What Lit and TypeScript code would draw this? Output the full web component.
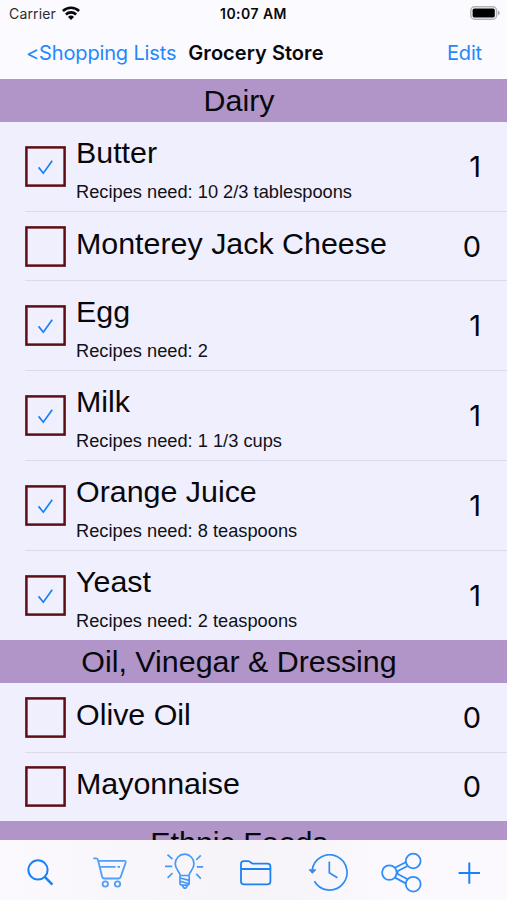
import { LitElement, html, svg, css, nothing } from "lit";
import { customElement, property } from "lit/decorators.js";

interface Item {
  name: string;
  need?: string;
  count: number;
  checked: boolean;
}
interface Section {
  title: string;
  items: Item[];
}

const sections: Section[] = [
  {
    title: "Dairy",
    items: [
      { name: "Butter", need: "10 2/3 tablespoons", count: 1, checked: true },
      { name: "Monterey Jack Cheese", count: 0, checked: false },
      { name: "Egg", need: "2", count: 1, checked: true },
      { name: "Milk", need: "1 1/3 cups", count: 1, checked: true },
      { name: "Orange Juice", need: "8 teaspoons", count: 1, checked: true },
      { name: "Yeast", need: "2 teaspoons", count: 1, checked: true },
    ],
  },
  {
    title: "Oil, Vinegar & Dressing",
    items: [
      { name: "Olive Oil", count: 0, checked: false },
      { name: "Mayonnaise", count: 0, checked: false },
    ],
  },
  { title: "Ethnic Foods", items: [] },
];

@customElement("shopping-row")
export class ShoppingRow extends LitElement {
  @property({ attribute: false }) item!: Item;

  static styles = css`
    :host {
      display: grid;
      grid-template-columns: 41px 1fr auto;
      align-items: center;
      box-sizing: border-box;
      height: 69px;
      margin-left: 25px;
      padding-right: 26px;
      border-bottom: 1px solid #dcdae8;
    }
    :host([tall]) {
      height: 90px;
    }
    .box {
      display: block;
      width: 41px;
      height: 41px;
      fill: none;
    }
    .frame {
      stroke: #5e0d14;
      stroke-width: 2.5;
    }
    .check {
      stroke: #1580fb;
      stroke-width: 1.7;
    }
    .text {
      padding-left: 10px;
      white-space: nowrap;
    }
    .name {
      font-size: 30.4px;
      line-height: 38px;
      margin-top: -7px;
      color: #08080c;
    }
    .need {
      font-size: 18.25px;
      line-height: 22px;
      margin-top: 10px;
      color: #111116;
    }
    :host([tall]) .name {
      margin-top: 2px;
    }
    .count {
      font-family: Inter, "Liberation Sans", sans-serif;
      font-size: 29px;
      line-height: 36px;
      margin-top: 1px;
      color: #08080c;
    }
  `;

  render() {
    const { name, need, count, checked } = this.item;
    return html`
      <svg class="box" viewBox="0 0 41 41">
        <rect class="frame" x="1.4" y="1.4" width="38.2" height="38.2" />
        ${checked ? svg`<path class="check" d="M13.6 21.4 L18.3 27.2 L27.2 14.8" />` : nothing}
      </svg>
      <div class="text">
        <div class="name">${name}</div>
        ${need ? html`<div class="need">Recipes need: ${need}</div>` : nothing}
      </div>
      <div class="count">${count}</div>
    `;
  }
}

const icons = {
  search: svg`<g stroke-width="2"><circle cx="38" cy="29.9" r="9.6"/><path stroke-width="2.6" d="M45 37.2 L52.4 44.6"/></g>`,
  cart: svg`<g stroke-width="1.8" opacity=".75"><path d="M93.3 18.3 h2.8 q1.4 0 1.8 1.4 l4.3 17.3 q.4 1.5 2 1.5 h14.6 q1.4 0 1.8-1.4 l5-14.3 q.5-2-1.4-2 h-25.3"/><path d="M100 26.9 h15.5 M117.5 26.9 h2.5"/><circle cx="105.3" cy="44" r="2.7"/><circle cx="117.5" cy="44" r="2.7"/></g>`,
  bulb: svg`<g stroke-width="1.7" opacity=".8"><path d="M180.3 35.5 C179.6 31.5 175.2 29.5 175.2 23.8 A9.4 9.6 0 0 1 194 23.8 C194 29.5 189.6 31.5 188.9 35.5 Z"/><path d="M180 36 v7.3 q0 1.8 2 1.8 h5.2 q2 0 2-1.8 V36 M180.2 38 l8.8 2.4 M180.2 41.2 l8.8 2.6 M182 45.2 l2.2 3 h1.4 l2-3"/><path d="M165 26.3 h7.2 M196.8 26.8 h6.4 M167.5 14.6 l5 4.6 M200.8 15.3 l-4.6 4.7 M167.6 37.8 l5-4.8 M200.8 38.6 l-4.6-4.8"/></g>`,
  folder: svg`<g stroke-width="1.8"><path d="M241 24 q0-2.8 2.8-2.8 h4.5 q1.4 0 2.4 1.2 t2.5 1.2 h14.2 q3 0 3 3 v15 q0 2.8-3 2.8 h-23.4 q-3 0-3-2.8 Z M241 29 h29.4"/></g>`,
  history: svg`<g stroke-width="1.7" opacity=".9"><path d="M312.2 30 A17.5 17.6 0 1 1 314.4 41.3"/><path d="M329.3 21.5 V32.8 L337.4 37.8"/><path fill="currentColor" stroke-width="1" d="M309.2 29.8 h6.6 l-3.4 3.5 Z"/></g>`,
  share: svg`<g stroke-width="1.8" opacity=".9"><circle cx="389.4" cy="32.6" r="7.3"/><circle cx="413.2" cy="21" r="7.4"/><circle cx="413.2" cy="44.2" r="7.4"/><path d="M395 27.8 L406.5 21.8 M396.4 31.8 L407.6 26 M396.4 33.3 L407.6 39.3 M395 37.6 L406.2 43.6 M396.5 32.5 h2"/></g>`,
  add: svg`<path stroke-width="2" d="M469.3 22.5 V43.8 M458.6 33.1 H480"/>`,
};

@customElement("app-root")
export class AppRoot extends LitElement {
  static styles = css`
    :host {
      display: flex;
      flex-direction: column;
      box-sizing: border-box;
      width: 507px;
      height: 900px;
      overflow: hidden;
      background: #f0effd;
      font-family: "Liberation Sans", Arial, sans-serif;
      color: #08080c;
    }
    .top {
      flex: none;
      height: 79px;
      background: #fbfaff;
      font-family: Inter, "Liberation Sans", sans-serif;
      white-space: nowrap;
    }
    .status {
      display: grid;
      grid-template-columns: 1fr auto 1fr;
      align-items: center;
      height: 27px;
      padding: 0 7px 0 9px;
      font-size: 14px;
    }
    .carrier {
      display: flex;
      align-items: center;
      gap: 6px;
      color: #2c2c30;
      letter-spacing: 0.15px;
    }
    .time {
      font-weight: 600;
      font-size: 14px;
      letter-spacing: 0.45px;
      margin-right: 2px;
    }
    .wifi {
      width: 18px;
      height: 14px;
      margin-top: -1px;
    }
    .battery {
      width: 30px;
      height: 14px;
      margin-top: -1px;
      justify-self: end;
    }
    .nav {
      display: flex;
      align-items: center;
      height: 52px;
      padding: 0 25px 0 26px;
      font-size: 20px;
    }
    .link {
      color: #2388fb;
      letter-spacing: -0.15px;
    }
    .title {
      font-weight: 600;
      margin-left: 12px;
      flex: 1;
      letter-spacing: 0.05px;
    }
    .list {
      flex: 1;
      min-height: 0;
      overflow: hidden;
    }
    .heading {
      height: 43px;
      box-sizing: border-box;
      padding-right: 29px;
      background: #b195c8;
      text-align: center;
      font-size: 30.4px;
      line-height: 43px;
      white-space: nowrap;
    }
    .last-tall {
      height: 89px;
      border-bottom: none;
    }
    .first-short {
      height: 70px;
    }
    .last-short {
      height: 68px;
      padding-bottom: 1px;
      border-bottom: none;
    }
    .toolbar {
      flex: none;
      height: 60px;
      background: linear-gradient(90deg, #fbf9fe, #f6f4f9 45%, #f7f5fa 60%, #fbf9fe 75%);
    }
    .icons {
      display: block;
      width: 507px;
      height: 60px;
      color: #1a82f7;
      stroke: currentColor;
      fill: none;
      stroke-linejoin: round;
    }
  `;

  private rowClass(item: Item, index: number, all: Item[]) {
    if (index === all.length - 1) return item.need ? "last-tall" : "last-short";
    return index === 0 && !item.need ? "first-short" : "";
  }

  render() {
    return html`
      <header class="top">
        <div class="status">
          <div class="carrier">
            <span>Carrier</span>
            <svg class="wifi" viewBox="0 0 18 14" fill="none" stroke="#08080c" stroke-width="2.6">
              <path d="M.9 5 A11.6 11.6 0 0 1 17.1 5" />
              <path d="M3.9 8.5 A7.3 7.3 0 0 1 14.1 8.5" />
              <path d="M9 14 L6 10.9 A4 4 0 0 1 12 10.9 Z" fill="#08080c" stroke="none" />
            </svg>
          </div>
          <div class="time">10:07 AM</div>
          <svg class="battery" viewBox="0 0 30 14">
            <rect x=".8" y=".8" width="25.8" height="12.4" rx="3.8" fill="none" stroke="#b3b2b7" stroke-width="1.5" />
            <rect x="2.6" y="2.6" width="22.2" height="8.8" rx="1.6" fill="#000" />
            <path d="M28 4.6 q1.8 .8 1.8 2.4 t-1.8 2.4 Z" fill="#aaa9ae" />
          </svg>
        </div>
        <nav class="nav">
          <span class="link">&lt;Shopping Lists</span>
          <span class="title">Grocery Store</span>
          <span class="link">Edit</span>
        </nav>
      </header>
      <main class="list">
        ${sections.map(
          (s) => html`
            <div class="heading">${s.title}</div>
            ${s.items.map(
              (item, i) => html`<shopping-row
                class=${this.rowClass(item, i, s.items)}
                ?tall=${!!item.need}
                .item=${item}
              ></shopping-row>`
            )}
          `
        )}
      </main>
      <footer class="toolbar">
        <svg class="icons" viewBox="0 0 507 60">${Object.values(icons)}</svg>
      </footer>
    `;
  }
}
